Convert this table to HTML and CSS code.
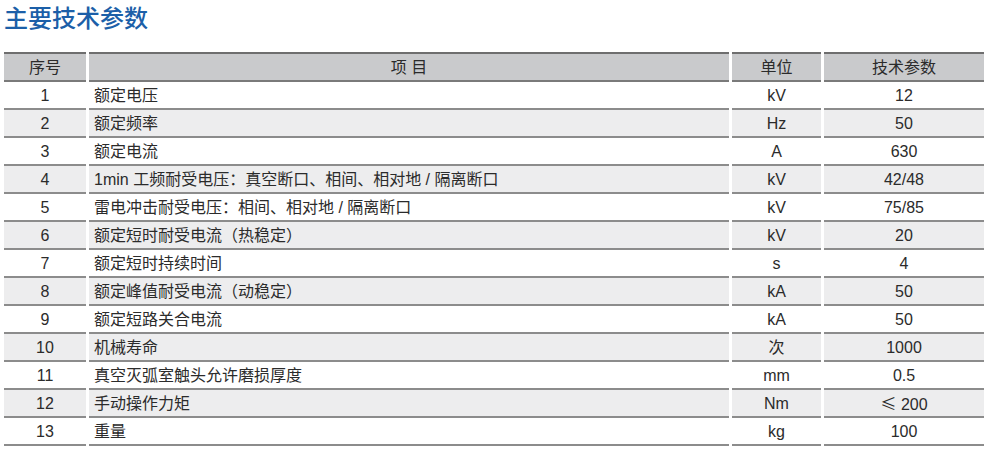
FILE: index.html
```html
<!DOCTYPE html>
<html lang="zh-CN">
<head>
<meta charset="utf-8">
<title>主要技术参数</title>
<link rel="stylesheet" href="styles.css">
</head>
<body>
<h1 class="title">主要技术参数</h1>
<div class="table">
  <div class="row head">
    <div class="cell c">序号</div>
    <div class="cell c">项 目</div>
    <div class="cell c">单位</div>
    <div class="cell c">技术参数</div>
  </div>
  <div class="row">
    <div class="cell c">1</div><div class="cell l">额定电压</div><div class="cell c">kV</div><div class="cell c">12</div>
  </div>
  <div class="row alt">
    <div class="cell c">2</div><div class="cell l">额定频率</div><div class="cell c">Hz</div><div class="cell c">50</div>
  </div>
  <div class="row">
    <div class="cell c">3</div><div class="cell l">额定电流</div><div class="cell c">A</div><div class="cell c">630</div>
  </div>
  <div class="row alt">
    <div class="cell c">4</div><div class="cell l">1min 工频耐受电压：真空断口、相间、相对地 / 隔离断口</div><div class="cell c">kV</div><div class="cell c">42/48</div>
  </div>
  <div class="row">
    <div class="cell c">5</div><div class="cell l">雷电冲击耐受电压：相间、相对地 / 隔离断口</div><div class="cell c">kV</div><div class="cell c">75/85</div>
  </div>
  <div class="row alt">
    <div class="cell c">6</div><div class="cell l">额定短时耐受电流（热稳定）</div><div class="cell c">kV</div><div class="cell c">20</div>
  </div>
  <div class="row">
    <div class="cell c">7</div><div class="cell l">额定短时持续时间</div><div class="cell c">s</div><div class="cell c">4</div>
  </div>
  <div class="row alt">
    <div class="cell c">8</div><div class="cell l">额定峰值耐受电流（动稳定）</div><div class="cell c">kA</div><div class="cell c">50</div>
  </div>
  <div class="row">
    <div class="cell c">9</div><div class="cell l">额定短路关合电流</div><div class="cell c">kA</div><div class="cell c">50</div>
  </div>
  <div class="row alt">
    <div class="cell c">10</div><div class="cell l">机械寿命</div><div class="cell c">次</div><div class="cell c">1000</div>
  </div>
  <div class="row">
    <div class="cell c">11</div><div class="cell l">真空灭弧室触头允许磨损厚度</div><div class="cell c">mm</div><div class="cell c">0.5</div>
  </div>
  <div class="row alt">
    <div class="cell c">12</div><div class="cell l">手动操作力矩</div><div class="cell c">Nm</div><div class="cell c"><span class="le">≤</span> 200</div>
  </div>
  <div class="row">
    <div class="cell c">13</div><div class="cell l">重量</div><div class="cell c">kg</div><div class="cell c">100</div>
  </div>
</div>
</body>
</html>
```
FILE: styles.css
```css
html, body {
  margin: 0;
  padding: 0;
  background: #ffffff;
}
body {
  font-family: "Liberation Sans", "Noto Sans CJK SC", sans-serif;
  color: #2b2b2b;
  width: 988px;
  height: 455px;
  overflow: hidden;
  text-spacing-trim: space-all;
}
.title {
  margin: 0;
  height: 49px;
  padding: 3px 0 0 4px;
  font-family: "Noto Sans CJK SC", sans-serif;
  font-weight: 500;
  font-size: 24px;
  line-height: 28px;
  color: #1c5fa8;
}
.table {
  margin-left: 4px;
  width: 980px;
}
.row {
  display: grid;
  grid-template-columns: 82px 640px 89px 160px;
  column-gap: 3px;
}
.cell {
  height: 26px;
  line-height: 27px;
  font-size: 16px;
  border-bottom: 2px solid #8c8c8c;
  white-space: nowrap;
}
.head .cell {
  background: #c9cacc;
  border-top: 2px solid #6e6e6e;
  border-bottom-color: #7a7a7a;
}
.alt .cell {
  background: #ededee;
}
.c {
  text-align: center;
}
.l {
  padding-left: 5px;
}
.le {
  font-family: "Noto Sans CJK SC", sans-serif;
}
```
